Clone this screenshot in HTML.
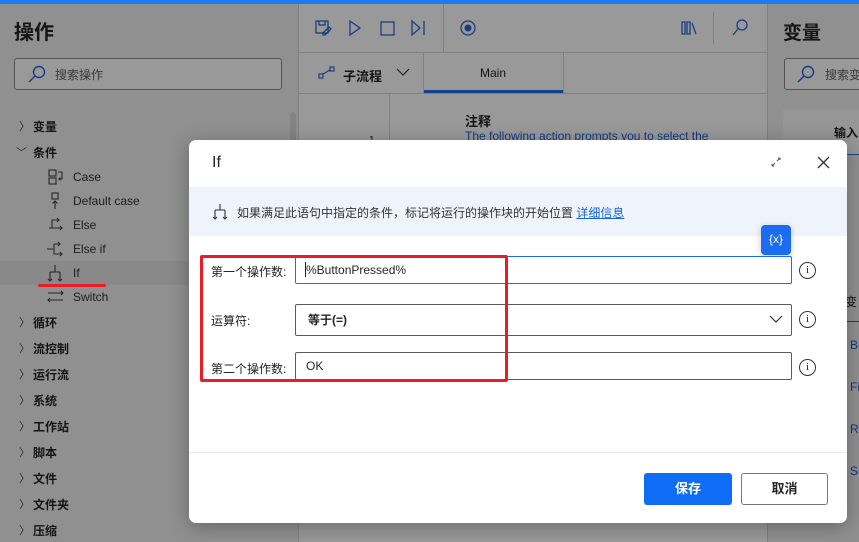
<!DOCTYPE html>
<html><head><meta charset="utf-8">
<style>
*{margin:0;padding:0;box-sizing:border-box}
html,body{width:859px;height:542px;overflow:hidden}
body{position:relative;background:#fff;font-family:"Liberation Sans","Noto Sans CJK SC",sans-serif;color:#242424}
.a{position:absolute}
.t{font-size:12px;white-space:nowrap}
.cat{position:absolute;left:33px;font-size:12px;font-weight:bold;color:#242424}
.chev{position:absolute;left:19px;font-size:11px;color:#444}
.sub{position:absolute;left:73px;font-size:12px;color:#333}
.ic{position:absolute;left:46px}
.lbl{position:absolute;left:211px;font-size:12px;color:#222}
.inp{position:absolute;left:295px;width:497px;border:1px solid #5a5a5a;border-radius:2px;background:#fff;font-size:12px;padding-left:10px}
.info{position:absolute;left:799px;width:17px;height:17px;border:1.3px solid #333;border-radius:50%;font-size:11px;text-align:center;line-height:14px;font-family:"Liberation Serif",serif}
</style></head><body>
<div class="a" style="left:0;top:0;width:859px;height:4px;background:#1f7cf0"></div>
<!-- left panel -->
<div class="a" style="left:0;top:4px;width:298px;height:538px;background:#f0f0f0"></div>
<div class="a" style="left:298px;top:4px;width:1px;height:538px;background:#d6d6d6"></div>
<div class="a" style="left:14px;top:16px;font-size:20px;font-weight:bold;color:#242424">操作</div>
<div class="a" style="left:14px;top:58px;width:268px;height:32px;border:1px solid #8a8a8a;border-radius:3px;background:#fff"></div>
<svg class="a" style="left:27px;top:64px" width="20" height="20"><circle cx="12" cy="8" r="5.5" fill="none" stroke="#2766d8" stroke-width="1.4"/><line x1="8" y1="12" x2="2" y2="18" stroke="#2766d8" stroke-width="1.4"/></svg>
<div class="a t" style="left:55px;top:66px;color:#616161">搜索操作</div>
<div class="a" style="left:290px;top:112px;width:6px;height:30px;border-radius:3px;background:#ddd"></div>
<div class="a" style="left:0;top:261px;width:298px;height:24px;background:#e4e4e4"></div>
<div class="chev" style="top:118px">〉</div><div class="cat" style="top:118px">变量</div>
<div class="chev" style="top:144px;left:16px;transform:rotate(90deg)">〉</div><div class="cat" style="top:144px">条件</div>
<svg class="ic" style="top:169px" width="20" height="17" fill="none" stroke="#444" stroke-width="1.1"><rect x="3" y="1" width="7" height="6"/><rect x="3" y="9" width="7" height="6"/><path d="M12 3h4v7h-3m1.5-1.5L13 10l1.5 1.5"/></svg>
<div class="sub" style="top:170px">Case</div>
<svg class="ic" style="top:192px" width="20" height="18" fill="none" stroke="#444" stroke-width="1.1"><rect x="6" y="1" width="6" height="6"/><path d="M9 17V9m-2.5 2.5L9 9l2.5 2.5"/></svg>
<div class="sub" style="top:194px">Default case</div>
<svg class="ic" style="top:217px" width="20" height="16" fill="none" stroke="#444" stroke-width="1.1"><path d="M3 11h13m-2-2l2 2-2 2M6 11V3h7m-2-2l2 2-2 2"/></svg>
<div class="sub" style="top:218px">Else</div>
<svg class="ic" style="top:241px" width="20" height="16" fill="none" stroke="#444" stroke-width="1.1"><path d="M1 8h6M8 3v10h8m-2-2l2 2-2 2M8 3h6m-2-2l2 2-2 2"/></svg>
<div class="sub" style="top:242px">Else if</div>
<svg class="ic" style="top:264px" width="20" height="18" fill="none" stroke="#444" stroke-width="1.1"><path d="M9 1v7M4 8h10M4 8v9m-2-2l2 2 2-2M14 8v9m-2-2l2 2 2-2"/></svg>
<div class="sub" style="top:266px">If</div>
<svg class="ic" style="top:289px" width="20" height="16" fill="none" stroke="#444" stroke-width="1.1"><path d="M2 4h15m-2-2l2 2-2 2M17 11H2m2-2l-2 2 2 2"/></svg>
<div class="sub" style="top:290px">Switch</div>
<div class="chev" style="top:314px">〉</div><div class="cat" style="top:314px">循环</div>
<div class="chev" style="top:340px">〉</div><div class="cat" style="top:340px">流控制</div>
<div class="chev" style="top:366px">〉</div><div class="cat" style="top:366px">运行流</div>
<div class="chev" style="top:392px">〉</div><div class="cat" style="top:392px">系统</div>
<div class="chev" style="top:418px">〉</div><div class="cat" style="top:418px">工作站</div>
<div class="chev" style="top:444px">〉</div><div class="cat" style="top:444px">脚本</div>
<div class="chev" style="top:470px">〉</div><div class="cat" style="top:470px">文件</div>
<div class="chev" style="top:496px">〉</div><div class="cat" style="top:496px">文件夹</div>
<div class="chev" style="top:522px">〉</div><div class="cat" style="top:522px">压缩</div>
<!-- middle -->
<div class="a" style="left:299px;top:4px;width:468px;height:538px;background:#fff"></div>
<div class="a" style="left:299px;top:52px;width:468px;height:1px;background:#d6d6d6"></div>
<div class="a" style="left:299px;top:93px;width:468px;height:1px;background:#d6d6d6"></div>
<div class="a" style="left:443px;top:4px;width:1px;height:48px;background:#d6d6d6"></div>
<div class="a" style="left:713px;top:12px;width:1px;height:32px;background:#d6d6d6"></div>
<div class="a" style="left:423px;top:53px;width:1px;height:40px;background:#d6d6d6"></div>
<div class="a" style="left:563px;top:53px;width:1px;height:40px;background:#d6d6d6"></div>
<div class="a" style="left:424px;top:90px;width:139px;height:3px;background:#1f6fe8"></div>
<div class="a" style="left:389px;top:94px;width:1px;height:50px;background:#d6d6d6"></div>
<svg class="a" style="left:314px;top:18px" width="120" height="20" fill="none" stroke="#2766d8" stroke-width="1.3"><rect x="2" y="3" width="12" height="12"/><path d="M5 3v4h6V3M9 15l6-6 2 2-6 6h-2z"/><path d="M36 3l10 7-10 7z"/><rect x="67" y="4" width="13" height="13"/><path d="M98 3l8 7-8 7zM110 3v14"/></svg>
<svg class="a" style="left:459px;top:19px" width="18" height="18"><circle cx="9" cy="9" r="7" fill="none" stroke="#2766d8" stroke-width="1.3"/><circle cx="9" cy="9" r="3.5" fill="#2766d8"/></svg>
<svg class="a" style="left:680px;top:18px" width="70" height="20" fill="none" stroke="#2766d8" stroke-width="1.3"><path d="M2 4v12h3V4zM7 4v12h3V4zM12 5l4 11"/><circle cx="62" cy="7" r="5"/><path d="M58 11l-5 6"/></svg>
<svg class="a" style="left:318px;top:66px" width="18" height="14" fill="none" stroke="#2766d8" stroke-width="1.2"><rect x="1" y="8" width="4" height="4"/><rect x="12" y="1" width="4" height="4"/><path d="M5 8l7-4"/></svg>
<div class="a t" style="left:343px;top:66px;font-weight:bold;font-size:13px">子流程</div>
<svg class="a" style="left:396px;top:68px" width="14" height="9" fill="none" stroke="#333" stroke-width="1.2"><path d="M1 1l6 6 6-6"/></svg>
<div class="a t" style="left:480px;top:66px">Main</div>
<div class="a t" style="left:465px;top:111px;font-weight:bold;font-size:13px">注释</div>
<div class="a t" style="left:465px;top:129px;color:#1f5fd8">The following action prompts you to select the</div>
<div class="a t" style="left:369px;top:135px;font-size:10px">1</div>
<!-- right -->
<div class="a" style="left:767px;top:4px;width:92px;height:538px;background:#f0f0f0;border-left:1px solid #d6d6d6"></div>
<div class="a" style="left:783px;top:18px;font-size:19px;font-weight:bold">变量</div>
<div class="a" style="left:784px;top:58px;width:80px;height:32px;border:1px solid #8a8a8a;border-radius:3px;background:#fff"></div>
<svg class="a" style="left:796px;top:64px" width="20" height="20"><circle cx="12" cy="8" r="5.5" fill="none" stroke="#2766d8" stroke-width="1.4"/><line x1="8" y1="12" x2="2" y2="18" stroke="#2766d8" stroke-width="1.4"/></svg>
<div class="a t" style="left:825px;top:66px;color:#616161">搜索变</div>
<div class="a" style="left:783px;top:110px;width:76px;height:45px;background:#fafafa;border-bottom:1px solid #1f6fe8"></div>
<div class="a t" style="left:834px;top:124px;font-weight:bold">输入</div>
<div class="a t" style="left:845px;top:293px">变</div>
<div class="a" style="left:847px;top:321px;width:12px;height:1px;background:#1f6fe8"></div>
<div class="a t" style="left:850px;top:338px;color:#1f5fd8">Bu</div>
<div class="a t" style="left:850px;top:380px;color:#1f5fd8">Fi</div>
<div class="a t" style="left:850px;top:422px;color:#1f5fd8">Re</div>
<div class="a t" style="left:850px;top:464px;color:#1f5fd8">Se</div>
<!-- overlay -->
<div class="a" style="left:0;top:4px;width:859px;height:538px;background:rgba(0,0,0,0.4)"></div>
<div class="a" style="left:38px;top:284px;width:68px;height:3px;background:#e81d25;border-radius:2px"></div>
<!-- dialog -->
<div class="a" style="left:189px;top:140px;width:658px;height:383px;background:#fff;border-radius:7px;box-shadow:0 4px 20px rgba(0,0,0,.3)"></div>
<div class="a" style="left:212px;top:154px;font-size:16px">If</div>
<svg class="a" style="left:771px;top:157px" width="10" height="10" fill="none" stroke="#555" stroke-width="1"><path d="M1 9l3-3M9 1L6 4M1 9h2M1 9V7M9 1H7M9 1v2"/></svg>
<svg class="a" style="left:817px;top:156px" width="13" height="13" stroke="#333" stroke-width="1.3"><path d="M1 1l11 11M12 1L1 12"/></svg>
<div class="a" style="left:189px;top:187px;width:658px;height:49px;background:#eff4fc"></div>
<svg class="a" style="left:212px;top:203px" width="16" height="18" fill="none" stroke="#333" stroke-width="1.1"><path d="M8 1v6M3 7h10M3 7v9m-2-2l2 2 2-2M13 7v9m-2-2l2 2 2-2"/></svg>
<div class="a t" style="left:237px;top:204px;color:#333">如果满足此语句中指定的条件，标记将运行的操作块的开始位置 <span style="color:#1565d8;text-decoration:underline">详细信息</span></div>
<div class="a" style="left:761px;top:225px;width:30px;height:30px;background:#1a6cf0;border-radius:4px;color:#fff;font-size:12px;text-align:center;line-height:29px;box-shadow:0 2px 8px rgba(0,0,0,.2)">{x}</div>
<div class="lbl" style="top:263px">第一个操作数:</div>
<div class="inp" style="top:256px;height:28px;border-color:#1a6cf0;line-height:26px">%ButtonPressed%</div>
<div class="a" style="left:305px;top:262px;width:1px;height:15px;background:#222"></div>
<div class="info" style="top:262px">i</div>
<div class="lbl" style="top:312px">运算符:</div>
<div class="inp" style="top:304px;height:32px;line-height:30px;font-weight:bold;padding-left:12px">等于(=)</div>
<svg class="a" style="left:769px;top:315px" width="14" height="9" fill="none" stroke="#333" stroke-width="1.2"><path d="M1 1l6 6 6-6"/></svg>
<div class="info" style="top:311px">i</div>
<div class="lbl" style="top:360px">第二个操作数:</div>
<div class="inp" style="top:352px;height:28px;line-height:26px">OK</div>
<div class="info" style="top:359px">i</div>
<div class="a" style="left:200px;top:255px;width:308px;height:127px;border:3px solid #e81d25;border-radius:2px"></div>
<div class="a" style="left:189px;top:452px;width:658px;height:1px;background:#e6e6e6"></div>
<div class="a" style="left:644px;top:473px;width:88px;height:32px;background:#0f6cf5;border-radius:3px;color:#fff;font-size:13px;font-weight:bold;text-align:center;line-height:32px">保存</div>
<div class="a" style="left:741px;top:473px;width:87px;height:32px;border:1px solid #777;border-radius:3px;font-size:13px;font-weight:bold;text-align:center;line-height:30px">取消</div>
</body></html>
